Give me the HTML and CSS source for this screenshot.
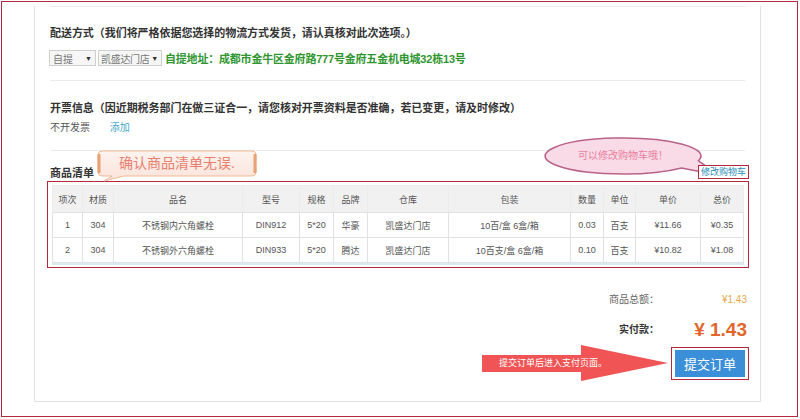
FILE: index.html
```html
<!DOCTYPE html>
<html lang="zh-CN">
<head>
	<meta charset="UTF-8" />
	<title>确认订单</title>
	<link rel="stylesheet" href="styles.css">
</head>
<body>
	<div class="frame">
		<div class="panel">
			<hr class="sep first" />
			<!-- 配送方式 -->
			<h3 class="sec-title">配送方式（我们将严格依据您选择的物流方式发货，请认真核对此次选项。）</h3>
			<div class="ship-row">
				<span class="fake-select sel-a">自提<i>▼</i></span>
				<span class="fake-select sel-b">凯盛达门店<i>▼</i></span>
				<span class="pickup">自提地址：成都市金牛区金府路777号金府五金机电城32栋13号</span>
			</div>
			<hr class="sep" />
			<!-- 开票信息 -->
			<h3 class="sec-title">开票信息（因近期税务部门在做三证合一，请您核对开票资料是否准确，若已变更，请及时修改）</h3>
			<div class="invoice-row">
				<span>不开发票</span>
				<a class="add" href="#">添加</a>
			</div>
			<hr class="sep" />
			<!-- 商品清单 -->
			<div class="list-head">
				<h3>商品清单</h3>
				<a class="edit-cart" href="#">修改购物车</a>
			</div>
			<div class="goods-box">
				<div class="goods-wrap">
					<table class="goods">
						<colgroup>
							<col style="width:30px"><col style="width:31px"><col style="width:129px"><col style="width:57px">
							<col style="width:34px"><col style="width:34px"><col style="width:81px"><col style="width:122px">
							<col style="width:33px"><col style="width:32px"><col style="width:65px"><col style="width:43px">
						</colgroup>
						<tr>
							<th>项次</th><th>材质</th><th>品名</th><th>型号</th><th>规格</th><th>品牌</th>
							<th>仓库</th><th>包装</th><th>数量</th><th>单位</th><th>单价</th><th>总价</th>
						</tr>
						<tr>
							<td>1</td><td>304</td><td>不锈钢内六角螺栓</td><td>DIN912</td><td>5*20</td><td>华豪</td>
							<td>凯盛达门店</td><td>10百/盒 6盒/箱</td><td>0.03</td><td>百支</td><td>¥11.66</td><td>¥0.35</td>
						</tr>
						<tr>
							<td>2</td><td>304</td><td>不锈钢外六角螺栓</td><td>DIN933</td><td>5*20</td><td>腾达</td>
							<td>凯盛达门店</td><td>10百支/盒 6盒/箱</td><td>0.10</td><td>百支</td><td>¥10.82</td><td>¥1.08</td>
						</tr>
					</table>
				</div>
			</div>
			<!-- 金额 -->
			<div class="sum-row">
				<span class="sum-label">商品总额：</span>
				<span class="sum-val">¥1.43</span>
			</div>
			<div class="sum-row pay">
				<span class="sum-label">实付款：</span>
				<span class="sum-val">¥ 1.43</span>
			</div>
			<div class="submit-row">
				<div class="tip-arrow">
					<svg width="187" height="38" viewBox="0 0 187 38">
						<path d="M0 11 H99 V1 L186 19 L99 37 V28 H0 Z" fill="#f05454" />
					</svg>
					<span>提交订单后进入支付页面。</span>
				</div>
				<div class="btn-box"><button class="submit-btn">提交订单</button></div>
			</div>

			<!-- 提示气泡 -->
			<div class="note-check">
				<svg width="165" height="35" viewBox="0 0 165 35">
					<defs>
						<linearGradient id="ng" x1="0" y1="0" x2="0" y2="1">
							<stop offset="0" stop-color="#fdf3ef" />
							<stop offset="1" stop-color="#fae3da" />
						</linearGradient>
					</defs>
					<path d="M7 2 H157 Q161 2 161 6 V23 Q161 27 157 27 H29 L9 32 L17 27 H7 Q3 27 3 23 V6 Q3 2 7 2 Z" fill="url(#ng)" stroke="#efbb96" stroke-width="1" />
					<path d="M4 5 V24 M160 5 V24" stroke="#e9a272" stroke-width="3" />
				</svg>
				<span>确认商品清单无误.</span>
			</div>
			<div class="note-cart">
				<svg width="184" height="46" viewBox="0 0 184 46">
					<path d="M155.3 24.7 A78 18 0 1 0 138.5 31.9 L175 39 Z" fill="#f9dbe7" stroke="#b8628a" stroke-width="1.5" />
				</svg>
				<span>可以修改购物车哦！</span>
			</div>
		</div>
	</div>
</body>
</html>
```

FILE: styles.css
```css
html,
body,
div,
h3,
table {
	margin: 0;
	padding: 0;
}

body {
	background-color: #fff;
	font-family: "Liberation Sans", "Noto Sans CJK SC", sans-serif;
	color: #444;
}

a {
	text-decoration: none;
}

/*外框*/
.frame {
	margin: 1px;
	width: 795px;
	height: 414px;
	border: 1px solid #b42a3c;
}

.panel {
	position: relative;
	width: 695px;
	height: 395px;
	margin-left: 32px;
	padding: 0 15px;
	border: 1px solid #e2e2e2;
	border-top: none;
}

.sep {
	height: 0;
	margin: 14px 0 0;
	border: 0;
	border-top: 1px solid #ebebeb;
}

.sep.first {
	margin-top: 4px;
}

.sec-title {
	margin-top: 18px;
	font-size: 11px;
	line-height: 16px;
	letter-spacing: -0.05px;
	color: #333;
	white-space: nowrap;
}

.sep + .sec-title {
	margin-top: 19px;
}

.sep.first + .sec-title {
	margin-top: 18px;
}

/*配送方式*/
.ship-row {
	display: flex;
	align-items: center;
	gap: 2px;
	height: 16px;
	margin: 9px 0 0 -1px;
}

.fake-select {
	display: inline-flex;
	align-items: center;
	justify-content: space-between;
	box-sizing: border-box;
	height: 16px;
	padding: 0 3px 0 3px;
	border: 1px solid #cfcfcf;
	background-color: #f6f6f6;
	font-size: 10px;
	color: #777;
	white-space: nowrap;
}

.fake-select i {
	font-style: normal;
	font-size: 7px;
	color: #333;
}

.sel-a {
	width: 47px;
}

.sel-b {
	width: 64px;
	padding-left: 2px;
	letter-spacing: -0.3px;
}

.pickup {
	margin-left: 1px;
	font-size: 11px;
	font-weight: bold;
	letter-spacing: -0.2px;
	color: #2f962f;
	white-space: nowrap;
}

/*开票*/
.invoice-row {
	margin-top: 4px;
	font-size: 10px;
	line-height: 16px;
	color: #555;
}

.invoice-row .add {
	margin-left: 17px;
	color: #45a9c7;
}

/*商品清单*/
.list-head {
	display: flex;
	justify-content: space-between;
	align-items: flex-start;
	height: 16px;
	margin-top: 14px;
}

.list-head h3 {
	font-size: 11px;
	line-height: 16px;
	color: #333;
}

.edit-cart {
	position: relative;
	z-index: 2;
	margin-right: -4px;
	padding: 0 2px;
	border: 1px solid #b42a3c;
	background-color: #fff;
	font-size: 9px;
	line-height: 12px;
	color: #2a8db5;
}

.goods-box {
	margin: 0 -4px 0 -3px;
	padding: 3px 4px 2px;
	border: 1px solid #b42a3c;
}

.goods-wrap {
	border-bottom: 2px solid #d8eeee;
}

.goods {
	width: 100%;
	table-layout: fixed;
	border-collapse: collapse;
	font-size: 9px;
	color: #555;
	text-align: center;
}

.goods th {
	height: 24px;
	font-weight: normal;
	background-color: #f1f1f1;
	border: 1px solid #ececec;
	border-bottom-color: #e2e2e2;
}

.goods td {
	height: 22px;
	border: 1px solid #e2e2e2;
	white-space: nowrap;
}

/*金额*/
.sum-row {
	display: flex;
	justify-content: flex-end;
	align-items: center;
	margin: 24px -2px 0 0;
	line-height: 16px;
}

.sum-label {
	font-size: 10px;
	color: #666;
}

.sum-val {
	width: 88px;
	text-align: right;
	font-size: 10px;
	color: #e6a84a;
}

.sum-row.pay {
	margin-top: 10px;
	line-height: 24px;
}

.pay .sum-label {
	font-weight: bold;
	color: #333;
}

.pay .sum-val {
	font-size: 19px;
	font-weight: bold;
	color: #e2662c;
}

.submit-row {
	display: flex;
	justify-content: flex-end;
	align-items: center;
	gap: 2px;
	margin: 2px -4px 0 0;
}

.tip-arrow {
	position: relative;
	width: 187px;
	height: 38px;
}

.tip-arrow svg {
	display: block;
}

.tip-arrow span {
	position: absolute;
	left: 17px;
	top: 12px;
	font-size: 9px;
	line-height: 14px;
	color: #fff;
	white-space: nowrap;
}

.btn-box {
	padding: 2px 3px;
	border: 1px solid #b42a3c;
}

.submit-btn {
	display: block;
	width: 70px;
	height: 27px;
	border: none;
	background-color: #3b8fd9;
	font-family: "Liberation Sans", "Noto Sans CJK SC", sans-serif;
	font-size: 13px;
	color: #fff;
}

/*提示气泡*/
.note-check,
.note-cart {
	position: absolute;
}

.note-check svg,
.note-cart svg {
	display: block;
}

.note-check {
	left: 60px;
	top: 143px;
}

.note-check span {
	position: absolute;
	left: 3px;
	top: 2px;
	width: 158px;
	line-height: 25px;
	text-align: center;
	font-size: 14px;
	color: #e9806f;
}

.note-cart {
	left: 508px;
	top: 130px;
}

.note-cart span {
	position: absolute;
	left: 2px;
	top: 2px;
	width: 156px;
	line-height: 36px;
	text-align: center;
	font-size: 10px;
	color: #e97f9e;
}
```
